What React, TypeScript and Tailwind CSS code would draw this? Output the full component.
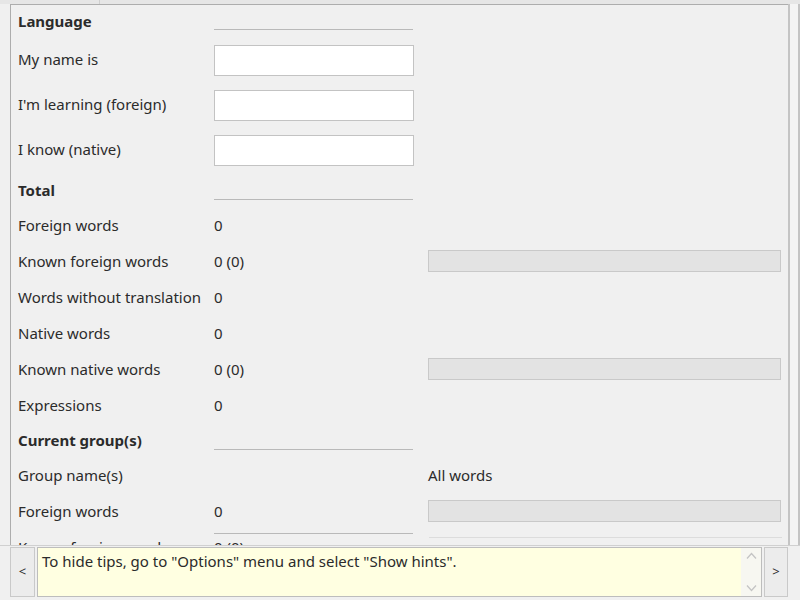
import React from "react";

const font = { fontFamily: '"Noto Sans", "Open Sans", sans-serif' };

function Header({ title, h, lineTop }: { title: string; h: string; lineTop: string }) {
  return (
    <div className={`flex shrink-0 items-center ${h}`}>
      <div className="w-[196px] font-bold">{title}</div>
      <div className={`h-px w-[199px] self-start bg-[#b9b9b9] ${lineTop}`} />
    </div>
  );
}

function InputRow({ label }: { label: string }) {
  return (
    <div className="flex h-[45px] shrink-0 items-center">
      <div className="w-[196px] pb-[2px]">{label}</div>
      <div className="h-[31px] w-[200px] border border-[#c3c3c3] bg-white" />
    </div>
  );
}

function StatRow({
  label,
  value,
  bar,
  extra,
}: {
  label: string;
  value?: string;
  bar?: boolean;
  extra?: string;
}) {
  return (
    <div className="flex h-[36px] shrink-0 items-center">
      <div className="w-[196px] whitespace-nowrap">{label}</div>
      <div className="w-[214px]">{value}</div>
      {bar && (
        <div className="h-[22px] w-[353px] border border-[#c9c9c9] bg-[#e3e3e3]" />
      )}
      {extra && <div>{extra}</div>}
    </div>
  );
}

export default function App() {
  return (
    <div
      className="flex h-[600px] w-[800px] flex-col overflow-hidden bg-[#f0f0f0] text-[15px] text-[#2b2b2b]"
      style={font}
    >
      {/* tab strip */}
      <div className="flex h-[4px] shrink-0 bg-[#e6e6e6]">
        <div className="w-[100px] border-r border-[#cfcfcf]" />
        <div className="flex-1" />
      </div>
      <div className="flex min-h-0 flex-1 overflow-hidden">
        <div className="w-[10px]" />
        <div className="flex flex-1 flex-col overflow-hidden border-l border-t border-[#adadad] pl-[7px]">
          <Header title="Language" h="h-[33px]" lineTop="mt-[24px]" />
          <InputRow label="My name is" />
          <InputRow label="I'm learning (foreign)" />
          <InputRow label="I know (native)" />
          <Header title="Total" h="h-[34px]" lineTop="mt-[26px]" />
          <StatRow label="Foreign words" value="0" />
          <StatRow label="Known foreign words" value="0 (0)" bar />
          <StatRow label="Words without translation" value="0" />
          <StatRow label="Native words" value="0" />
          <StatRow label="Known native words" value="0 (0)" bar />
          <StatRow label="Expressions" value="0" />
          <Header title="Current group(s)" h="h-[34px]" lineTop="mt-[26px]" />
          <StatRow label="Group name(s)" extra="All words" />
          <StatRow label="Foreign words" value="0" bar />
          <div className="relative flex h-[36px] shrink-0 items-center">
            <div className="absolute left-[196px] top-[4px] h-px w-[199px] bg-[#b9b9b9]" />
            <div className="absolute left-[411px] top-[8px] h-px w-[353px] bg-[#dcdcdc]" />
            <div className="w-[196px] whitespace-nowrap">Known foreign words</div>
            <div>0 (0)</div>
          </div>
        </div>
        <div className="w-[12px] border-l-2 border-r-2 border-[#c4c4c4] bg-[#f4f4f4]" />
      </div>
      {/* hint bar */}
      <div className="flex h-[55px] shrink-0 gap-[2px] border-t border-[#d0d0d0] bg-[#f0f0f0] pb-[3px] pl-[10px] pr-[12px] pt-[1px]">
        <div className="flex w-[25px] items-center justify-center border border-[#c9c9c9] bg-[#ececec] text-[13px]">
          &lt;
        </div>
        <div className="flex flex-1 border border-[#bdbdbd] bg-[#ffffe1]">
          <div className="flex-1 pl-[4px] pt-[2px]">
            To hide tips, go to "Options" menu and select "Show hints".
          </div>
          <div className="flex w-[20px] flex-col items-center justify-between bg-[#f7f7f1] py-[4px] text-[#c4c4c4]">
            <svg width="11" height="8" viewBox="0 0 11 8">
              <path d="M1 6.5 L5.5 1.5 L10 6.5" fill="none" stroke="currentColor" strokeWidth="1.3" />
            </svg>
            <svg width="11" height="8" viewBox="0 0 11 8">
              <path d="M1 1.5 L5.5 6.5 L10 1.5" fill="none" stroke="currentColor" strokeWidth="1.3" />
            </svg>
          </div>
        </div>
        <div className="flex w-[24px] items-center justify-center border border-[#c9c9c9] bg-[#ececec] text-[13px]">
          &gt;
        </div>
      </div>
    </div>
  );
}
